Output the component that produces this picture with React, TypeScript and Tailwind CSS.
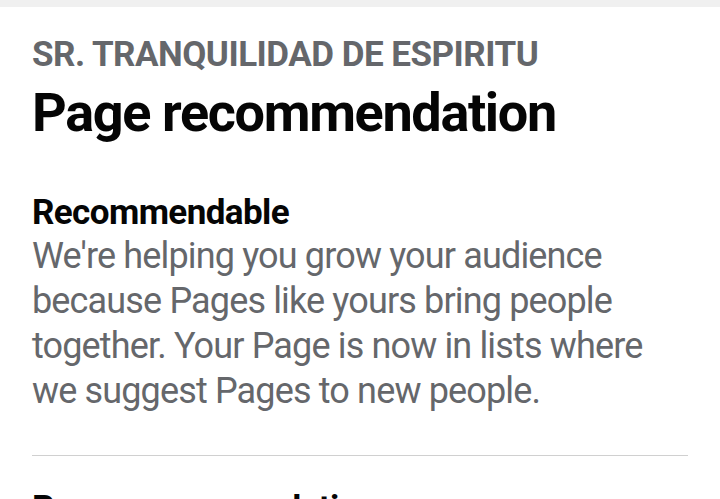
import React from "react";

export default function App() {
  return (
    <div className="w-[720px] h-[499px] overflow-hidden bg-white" style={{ fontFamily: "Roboto, 'Noto Sans', sans-serif" }}>
      <div className="h-[7px] bg-[#f0f0f0]" />
      <div className="px-8">
        <div className="pt-[26px] text-[35px] leading-[44px] font-bold text-[#65676b] tracking-[-0.5px]">
          SR. TRANQUILIDAD DE ESPIRITU
        </div>
        <h1 className="mt-[5px] text-[54px] leading-[62px] font-bold text-[#050505] tracking-[-1.35px]">
          Page recommendation
        </h1>
        <div className="pt-[48px] pb-[41px]">
          <div className="text-[35px] leading-[42px] font-bold text-[#050505] tracking-[-0.6px]">Recommendable</div>
          <p className="text-[36px] leading-[45px] text-[#65676b] tracking-[-0.85px]">
            We're helping you grow your audience because Pages like yours bring people together. Your Page is now in lists where we suggest Pages to new people.
          </p>
        </div>
        <div className="h-px bg-[#d0d0d0]" />
        <div className="pt-[33px] text-[35px] leading-[40px] font-bold text-[#050505] tracking-[-0.6px]">Page recommendations</div>
      </div>
    </div>
  );
}
